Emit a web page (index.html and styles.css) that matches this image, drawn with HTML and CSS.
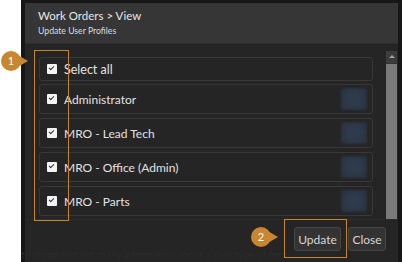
FILE: index.html
```html
<!DOCTYPE html>
<html lang="en">
<head>
    <meta charset="UTF-8">
    <meta name="viewport" content="width=device-width, initial-scale=1.0">
    <title>Update User Profiles</title>
    <link rel="stylesheet" href="styles.css">
</head>
<body>
    <!-- Page strip left of the overlay -->
    <div class="page-edge"></div>

    <!-- Dimmed overlay with modal -->
    <div class="overlay">
        <div class="modal">
            <div class="modal-header">
                <div class="modal-title">Work Orders &gt; View</div>
                <div class="modal-subtitle">Update User Profiles</div>
            </div>

            <div class="modal-body">
                <div class="profile-list">
                    <div class="profile-row select-all">
                        <span class="checkbox"></span>
                        <span class="label">Select all</span>
                    </div>
                    <div class="profile-row">
                        <span class="checkbox"></span>
                        <span class="label">Administrator</span>
                        <span class="blurred"></span>
                    </div>
                    <div class="profile-row">
                        <span class="checkbox"></span>
                        <span class="label">MRO - Lead Tech</span>
                        <span class="blurred"></span>
                    </div>
                    <div class="profile-row">
                        <span class="checkbox"></span>
                        <span class="label">MRO - Office (Admin)</span>
                        <span class="blurred"></span>
                    </div>
                    <div class="profile-row">
                        <span class="checkbox"></span>
                        <span class="label">MRO - Parts</span>
                        <span class="blurred"></span>
                    </div>
                </div>
                <div class="scrollbar">
                    <div class="scroll-up"></div>
                    <div class="scroll-thumb"></div>
                </div>
            </div>

            <div class="modal-footer">
                <span class="ghost-text">to dropdown list, many information about a case type of form</span>
                <button class="btn btn-update">Update</button>
                <button class="btn btn-close">Close</button>
            </div>
        </div>
    </div>

    <!-- Callouts -->
    <div class="callout-box box-one"></div>
    <div class="callout-box box-two"></div>
    <div class="badge badge-one">1</div>
    <div class="badge badge-two">2</div>
</body>
</html>
```

FILE: styles.css
```css
/* Halaman */
body {
    margin: 0;
    width: 402px;
    height: 262px;
    overflow: hidden;
    display: flex;
    font-family: Lato, "Open Sans", sans-serif;
    background: #ffffff;
}

.page-edge {
    width: 21px;
    background: #ffffff;
}

.overlay {
    flex: 1;
    background: #171717;
    padding: 3px 4px 0 4px;
    display: flex;
}

/* Modal */
.modal {
    flex: 1;
    background: #252525;
    display: flex;
    flex-direction: column;
}

.modal-header {
    height: 41px;
    box-sizing: border-box;
    background: #363636;
    border-bottom: 1px solid #2e2e2e;
    padding: 5px 13px 0 13px;
}

.modal-title {
    color: #e6e6e6;
    font-size: 11.5px;
    line-height: 15px;
}

.modal-subtitle {
    color: #dcdcdc;
    font-size: 8.7px;
    line-height: 12px;
    margin-top: 2px;
}

.modal-body {
    display: flex;
    height: 168px;
    padding: 7px 1px 0 14px;
    border-bottom: 1px solid #2c2c2c;
}

.profile-list {
    flex: 1;
    padding-top: 6px;
    display: flex;
    flex-direction: column;
    gap: 4px;
    overflow: hidden;
}

.profile-row {
    height: 30px;
    flex-shrink: 0;
    box-sizing: border-box;
    border: 1px solid #383838;
    border-radius: 3px;
    display: flex;
    align-items: center;
    padding: 0 5px 0 7px;
    color: #e2e2e2;
    font-size: 12px;
}

.profile-row.select-all {
    height: 24px;
    margin-bottom: -1px;
    font-size: 12.5px;
}

.checkbox {
    width: 10px;
    height: 10px;
    background: #f4f4f4;
    border-radius: 1px;
    position: relative;
    margin-right: 7px;
}

.checkbox::after {
    content: "";
    position: absolute;
    left: 3px;
    top: 1px;
    width: 2px;
    height: 4px;
    border: solid #333;
    border-width: 0 1.5px 1.5px 0;
    transform: rotate(45deg);
}

.label {
    flex: 1;
}

.blurred {
    width: 26px;
    height: 22px;
    background: radial-gradient(circle, #2f3b4c 30%, #27313f 100%);
    border-radius: 2px;
    filter: blur(1px);
}

/* Scrollbar */
.scrollbar {
    width: 11px;
    margin-left: 13px;
    background: #333;
    display: flex;
    flex-direction: column;
}

.scroll-up {
    height: 12px;
    background: #3c3c3c;
    position: relative;
}

.scroll-up::after {
    content: "";
    position: absolute;
    left: 3px;
    top: 4px;
    border: 3px solid transparent;
    border-bottom: 3px solid #a0a0a0;
    border-top: 0;
}

.scroll-thumb {
    flex: 1;
    background: #7a7a7a;
    margin-top: 1px;
}

/* Footer */
.modal-footer {
    flex: 1;
    display: flex;
    align-items: flex-start;
    justify-content: flex-end;
    gap: 7px;
    padding: 7px 12px 0 0;
    position: relative;
}

.ghost-text {
    position: absolute;
    left: -4px;
    top: 28px;
    font-size: 10px;
    color: #2b2b2b;
    white-space: nowrap;
}

.btn {
    height: 24px;
    padding: 0;
    background: #333;
    color: #d6d6d6;
    border: 1px solid #464646;
    border-radius: 3px;
    font-family: Lato, "Open Sans", sans-serif;
    font-size: 12px;
    text-align: center;
}

.btn-update {
    width: 47px;
}

.btn-close {
    width: 38px;
}

/* Callouts */
.callout-box {
    position: absolute;
    border: 1.5px solid #c8842c;
    box-sizing: border-box;
}

.box-one {
    left: 34px;
    top: 50px;
    width: 35px;
    height: 171px;
}

.box-two {
    left: 284px;
    top: 219px;
    width: 63px;
    height: 39px;
}

.badge {
    position: absolute;
    width: 20px;
    height: 20px;
    line-height: 20px;
    border-radius: 50%;
    background: #c8862e;
    color: #fff;
    font-size: 11px;
    text-align: center;
}

.badge::after {
    content: "";
    position: absolute;
    left: 15px;
    top: 3px;
    border-top: 7px solid transparent;
    border-bottom: 7px solid transparent;
    border-left: 12px solid #c8862e;
}

.badge-one {
    left: 1px;
    top: 51px;
}

.badge-two {
    left: 251px;
    top: 227px;
}
```
